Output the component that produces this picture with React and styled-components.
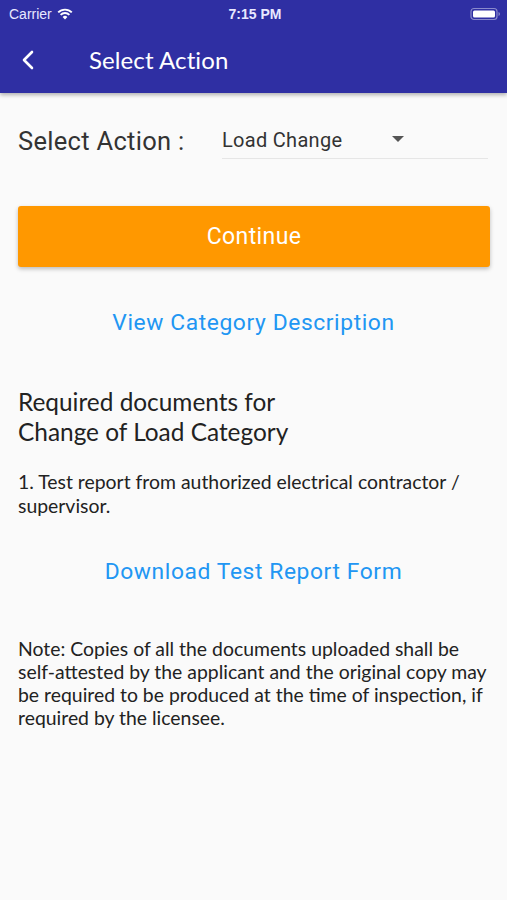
import React from 'react';
import styled, { createGlobalStyle } from 'styled-components';

const GlobalStyle = createGlobalStyle`
  html, body {
    margin: 0;
    padding: 0;
    background: #fafafa;
  }
  * { box-sizing: border-box; }
`;

const Screen = styled.div`
  width: 507px;
  min-height: 900px;
  background: #fafafa;
  display: flex;
  flex-direction: column;
`;

const TopBar = styled.header`
  background: #2f2fa3;
  color: #fff;
  box-shadow: 0 2px 4px rgba(0, 0, 0, 0.3);
  position: relative;
  z-index: 1;
`;

const StatusBar = styled.div`
  height: 28px;
  display: grid;
  grid-template-columns: 1fr auto 1fr;
  align-items: center;
  padding: 0 6px 0 9px;
  font-family: 'Liberation Sans', Arial, sans-serif;
  font-size: 14px;
  color: #e8e8ff;

  .left {
    display: flex;
    align-items: center;
    gap: 5px;
  }
  .time {
    font-weight: 700;
    font-size: 14px;
  }
  .right {
    display: flex;
    justify-content: flex-end;
  }
`;

const NavRow = styled.div`
  height: 65px;
  display: flex;
  align-items: center;
  padding: 0 0 2px 19px;
`;

const BackButton = styled.button`
  background: none;
  border: none;
  padding: 0;
  width: 18px;
  height: 20px;
  display: flex;
  align-items: center;
  justify-content: center;
  cursor: pointer;
`;

const Title = styled.h1`
  margin: 0 0 0 52px;
  font-family: Lato, 'Open Sans', sans-serif;
  font-weight: 400;
  font-size: 24px;
  letter-spacing: 0.1px;
`;

const Content = styled.main`
  padding: 0 18px 0 18px;
  display: flex;
  flex-direction: column;
`;

const SelectRow = styled.div`
  display: flex;
  align-items: center;
  margin-top: 29px;
  height: 37px;
`;

const Label = styled.span`
  font-family: Roboto, sans-serif;
  font-size: 25.5px;
  color: #333;
  width: 204px;
  letter-spacing: 0.3px;
`;

const Dropdown = styled.div`
  flex: 1;
  height: 37px;
  margin-right: 1px;
  display: flex;
  align-items: center;
  border-bottom: 1.5px solid #e6e6e6;
  padding-bottom: 1px;
  font-family: Roboto, sans-serif;
  font-size: 20px;
  color: #333;
  letter-spacing: 0.3px;

  .value {
    width: 170px;
  }
`;

const Caret = styled.span`
  width: 0;
  height: 0;
  border-left: 6px solid transparent;
  border-right: 6px solid transparent;
  border-top: 6px solid #555;
  margin-bottom: 2px;
`;

const PrimaryButton = styled.button`
  margin-top: 47px;
  height: 61px;
  width: 472px;
  border: none;
  border-radius: 3px;
  background: #ff9800;
  color: #fff;
  font-family: Roboto, sans-serif;
  font-size: 23px;
  letter-spacing: 0.4px;
  box-shadow: 0 2px 4px rgba(0, 0, 0, 0.25);
  cursor: pointer;
`;

const LinkText = styled.a`
  align-self: center;
  font-family: Roboto, sans-serif;
  font-size: 22.8px;
  letter-spacing: 0.6px;
  color: #2196f3;
  text-decoration: none;
  margin-top: ${p => p.$top}px;
`;

const Heading = styled.h2`
  margin: ${p => p.$top}px 0 0;
  font-family: Lato, sans-serif;
  font-weight: 400;
  font-size: 24.4px;
  line-height: 30px;
  color: #222;
`;

const Body = styled.p`
  margin: ${p => p.$top}px 0 0;
  font-family: Lato, sans-serif;
  font-size: 19.4px;
  line-height: ${p => p.$lh || 24}px;
  color: #222;
`;

const Wifi = () => (
  <svg width="16" height="12" viewBox="0 0 16 12">
    <path d="M8 11.5 L5.6 8.9 A3.4 3.4 0 0 1 10.4 8.9 Z" fill="#fff" />
    <path d="M3.6 6.9 A6.2 6.2 0 0 1 12.4 6.9" stroke="#fff" strokeWidth="1.9" fill="none" />
    <path d="M1.2 4.4 A9.6 9.6 0 0 1 14.8 4.4" stroke="#fff" strokeWidth="1.9" fill="none" />
  </svg>
);

const Battery = () => (
  <svg width="31" height="14" viewBox="0 0 31 14">
    <rect x="1" y="1.5" width="26" height="11" rx="3" fill="none" stroke="#8a8acc" strokeWidth="1.2" />
    <rect x="3" y="3.5" width="22" height="7" rx="1.5" fill="#fff" />
    <path d="M28.5 5 Q30 5.5 30 7 Q30 8.5 28.5 9 Z" fill="#8a8acc" />
  </svg>
);

const Chevron = () => (
  <svg width="14" height="20" viewBox="0 0 14 20">
    <path d="M11 2 L3 10 L11 18" stroke="#fff" strokeWidth="2.6" fill="none" strokeLinecap="round" strokeLinejoin="round" />
  </svg>
);

export default function App() {
  return (
    <Screen>
      <GlobalStyle />
      <TopBar>
        <StatusBar>
          <div className="left">
            <span>Carrier</span>
            <Wifi />
          </div>
          <span className="time">7:15 PM</span>
          <div className="right">
            <Battery />
          </div>
        </StatusBar>
        <NavRow>
          <BackButton aria-label="Back">
            <Chevron />
          </BackButton>
          <Title>Select Action</Title>
        </NavRow>
      </TopBar>

      <Content>
        <SelectRow>
          <Label>Select Action :</Label>
          <Dropdown>
            <span className="value">Load Change</span>
            <Caret />
          </Dropdown>
        </SelectRow>

        <PrimaryButton>Continue</PrimaryButton>

        <LinkText href="#" $top={42}>View Category Description</LinkText>

        <Heading $top={51}>
          Required documents for
          <br />
          Change of Load Category
        </Heading>

        <Body $top={23}>
          1. Test report from authorized electrical contractor / supervisor.
        </Body>

        <LinkText href="#" $top={40}>Download Test Report Form</LinkText>

        <Body $top={52} $lh={23}>
          Note: Copies of all the documents uploaded shall be self-attested by the
          applicant and the original copy may be required to be produced at the time of
          inspection, if required by the licensee.
        </Body>
      </Content>
    </Screen>
  );
}
